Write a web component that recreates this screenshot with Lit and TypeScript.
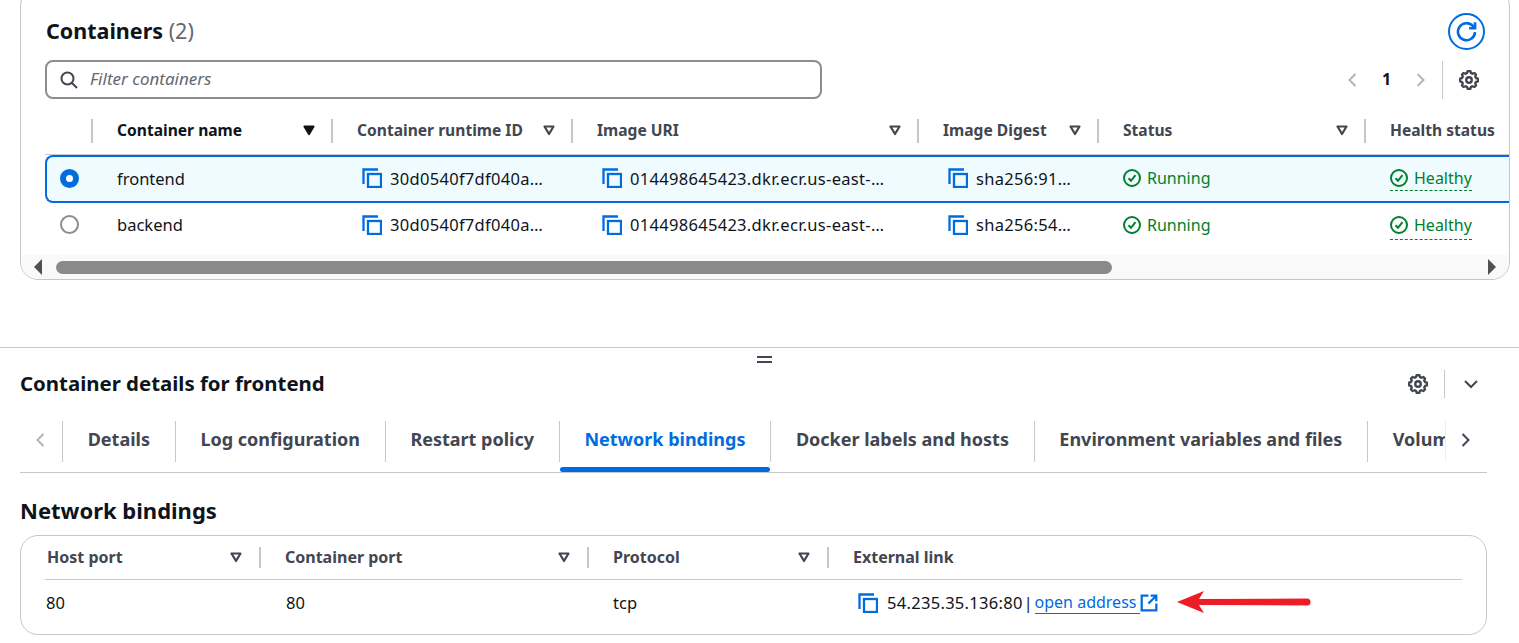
import { LitElement, html, css, svg } from "lit";
import { customElement } from "lit/decorators.js";

const copy = html`<svg class="copy" viewBox="0 0 20 20" fill="none" stroke="#006ce0" stroke-width="2.3"><path d="M1.5 16V1.5H16"/><rect x="6" y="6" width="13" height="13"/></svg>`;
const ok = html`<svg class="ok" viewBox="0 0 18 18" fill="none" stroke="#00802f" stroke-width="2"><circle cx="9" cy="9" r="8"/><path d="M5.5 9.2 8 11.8l4.5-5.6"/></svg>`;
const gearPath = svg`<path d="M13.7 6.5 13 5.3l.6-1.7-1.2-1.2-1.7.6-1.2-.7L9 .8H7l-.5 1.5-1.2.7-1.7-.6-1.2 1.2.6 1.7-.7 1.2-1.5.5v2l1.5.5.7 1.2-.6 1.7 1.2 1.2 1.7-.6 1.2.7.5 1.5h2l.5-1.5 1.2-.7 1.7.6 1.2-1.2-.6-1.7.7-1.2 1.5-.5v-2z"/><circle cx="8" cy="8" r="2.2"/>`;
const gear = html`<svg class="gear" viewBox="0 0 16 16" fill="none" stroke="#424650" stroke-width="1.9" stroke-linejoin="round">${gearPath}</svg>`;
const caret = (active = false) => html`<svg class="caret" viewBox="0 0 14 14" fill=${active ? "#0f141a" : "none"} stroke=${active ? "#0f141a" : "#424650"} stroke-width="2.2" stroke-linejoin="round"><path d="M2.5 3.5h9L7 11z"/></svg>`;
const chev = (d: string, cls: string) => html`<svg class=${cls} viewBox="0 0 16 16" fill="none" stroke="currentColor" stroke-width="2"><path d=${d}/></svg>`;
const LEFT = "M10.5 2 4.5 8l6 6";
const RIGHT = "M5.5 2l6 6-6 6";

const headers = [
  ["Container name", true, true],
  ["Container runtime ID", false, true],
  ["Image URI", false, true],
  ["Image Digest", false, true],
  ["Status", false, true],
  ["Health status", false, false],
] as const;

const rows = [
  { name: "frontend", sel: true, digest: "sha256:91…" },
  { name: "backend", sel: false, digest: "sha256:54…" },
];

const tabs = ["Details", "Log configuration", "Restart policy", "Network bindings", "Docker labels and hosts", "Environment variables and files", "Volumes"];

@customElement("app-root")
export class AppRoot extends LitElement {
  static styles = css`
    :host { display: block; width: 1519px; height: 643px; overflow: hidden; background: #fff; color: #0f141a; font-family: "Noto Sans", Roboto, sans-serif; font-size: 16px; }
    * { box-sizing: border-box; }
    svg { display: block; flex: none; }
    .card-top { margin: -12px 0 0 20px; width: 1490px; height: 292px; border: 1px solid #c6c6cd; border-radius: 18px; overflow: hidden; display: flex; flex-direction: column; }
    .head { display: flex; align-items: center; justify-content: space-between; padding: 23px 24px 1px 25px; height: 62px; }
    h2 { margin: 0; font-size: 21.5px; font-weight: 700; line-height: 30px; }
    h2 span { font-weight: 400; color: #656871; }
    .refresh { width: 37px; height: 37px; border: 2px solid #006ce0; border-radius: 50%; display: flex; align-items: center; justify-content: center; }
    .refresh svg { width: 21px; height: 21px; }
    .tools { display: flex; align-items: center; height: 39px; margin-top: 9px; padding-left: 24px; }
    .filter { width: 777px; height: 39px; border: 2px solid #8c8c94; border-radius: 8px; display: flex; align-items: center; padding: 0 0 2px 13px; gap: 12px; font-size: 17px; font-style: italic; color: #656871; }
    .filter svg { width: 18px; height: 18px; margin-top: 2px; }
    .pager { margin-left: auto; display: flex; align-items: center; height: 39px; }
    .pager .ch { width: 16px; height: 18px; color: #b4b4bb; }
    .pager .num { width: 51px; text-align: center; font-weight: 700; padding-bottom: 2px; }
    .pager .vr { width: 1px; height: 38px; background: #c6c6cd; margin: 0 16px 0 14px; }
    .pager .gear { width: 20px; height: 20px; margin-right: 30px; }
    .grid { display: grid; grid-template-columns: 46px 240px 240px 346px 180px 267px 200px; margin-left: 24px; }
    .th { height: 36px; margin-top: 20px; border-bottom: 1px solid #c6c6cd; padding-bottom: 11px; display: flex; }
    .th > div { flex: 1; display: flex; align-items: center; justify-content: space-between; border-left: 2px solid #c6c6cd; padding: 0 15px 2px 24px; font-size: 15.6px; font-weight: 700; color: #424650; white-space: nowrap; }
    .th .on { color: #0f141a; }
    .th.first > div { border-left: 0; }
    .caret { width: 14px; height: 14px; }
    .row { display: contents; }
    .td { height: 47px; display: flex; align-items: center; padding: 0 0 4px 26px; white-space: nowrap; gap: 8px; font-size: 16.5px; }
    .val { letter-spacing: 0.3px; }
    .td .copy { margin-left: 5px; }
    .copy { width: 20px; height: 20px; }
    .ok { width: 18px; height: 18px; }
    .green { color: #00802f; display: flex; align-items: center; gap: 6px; font-size: 16px; }
    .dash { border-bottom: 1px dashed #00802f; padding-bottom: 3px; margin-top: 4px; }
    .sel .td { height: 48px; padding-bottom: 2px; background: #f0fbff; border-top: 2px solid #006ce0; border-bottom: 2px solid #006ce0; }
    .sel .dash { padding-bottom: 1px; margin-top: 2px; }
    .sel .td:first-child { border-left: 2px solid #006ce0; border-radius: 8px 0 0 8px; }
    .td.radio-cell { padding-left: 15px; }
    .sel .td.radio-cell { padding-left: 13px; }
    .radio { width: 19px; height: 19px; border-radius: 50%; border: 2px solid #8c8c94; background: #fff; }
    .sel .radio { border: 6px solid #006ce0; }
    .scroll { margin-top: auto; height: 24px; background: #f9f9fa; display: flex; align-items: center; padding: 0 13px; }
    .tri { width: 0; height: 0; border-top: 8px solid transparent; border-bottom: 8px solid transparent; }
    .tri.l { border-right: 8px solid #505050; }
    .tri.r { border-left: 8px solid #505050; margin-left: auto; }
    .thumb { margin-left: 14px; width: 1056px; height: 13px; background: #8a8a8a; border-radius: 7px; }
    .bottom { margin-top: 67px; border-top: 1px solid #c6c6cd; }
    .handle { width: 15px; margin: 8px 0 0 757px; height: 7px; border-top: 2px solid #424650; border-bottom: 2px solid #424650; }
    .dhead { display: flex; align-items: center; height: 30px; margin: 6px 40px 0 20px; }
    .dhead h3 { margin: 0 0 2px; font-size: 20.4px; font-weight: 700; flex: 1; }
    .dhead .gear { width: 20px; height: 20px; }
    .dhead .vr { width: 1px; height: 28px; background: #c6c6cd; margin: 0 18px 0 16px; }
    .dhead .ch { width: 16px; height: 16px; color: #424650; }
    .tabs { display: flex; margin: 22px 32px 0 20px; height: 52px; border-bottom: 1px solid #c6c6cd; align-items: flex-start; }
    .nav { width: 42px; height: 41px; flex: none; display: flex; align-items: center; color: #b4b4bb; padding: 0 0 4px 13px; }
    .nav.next { color: #424650; width: 42px; padding-left: 11px; border-left: 1px solid #eee; }
    .nav svg { width: 16px; height: 18px; }
    .tabwrap { flex: 1; min-width: 0; display: flex; overflow: hidden; padding-bottom: 10px; margin-bottom: -10px; }
    .tab { flex: none; height: 41px; border-left: 1px solid #c6c6cd; padding: 0 24.7px 6px; display: flex; align-items: center; font-size: 18px; font-weight: 700; color: #424650; white-space: nowrap; position: relative; }
    .tab.act { color: #006ce0; }
    .tab.act::after { content: ""; position: absolute; left: 0; right: 0; top: 46px; height: 5px; background: #006ce0; border-radius: 3px; }
    h4 { margin: 22px 0 0 20px; font-size: 22px; font-weight: 700; line-height: 30px; }
    .card2 { margin: 10px 32px 0 20px; height: 100px; border: 1px solid #c6c6cd; border-radius: 18px; padding: 0 24px; }
    .g2 { display: grid; grid-template-columns: 216px 328px 240px 1fr; }
    .h2c { height: 44px; padding-top: 11px; border-bottom: 1px solid #c6c6cd; display: flex; }
    .h2c > div { flex: 1; height: 21px; display: flex; align-items: center; justify-content: space-between; font-size: 16px; font-weight: 700; color: #424650; padding: 0 16px 2px 2px; border-right: 2px solid #c6c6cd; }
    .h2c.n > div { padding-left: 24px; }
    .h2c.last > div { border-right: 0; padding-left: 24px; }
    .c2 { height: 47px; display: flex; align-items: center; padding: 0 0 2px 25px; gap: 9px; font-size: 16.5px; }
    .c2.a { padding-left: 1px; }
    .c2.t { padding-left: 24px; }
    .c2 .copy { margin-left: 5px; }
    .lk { display: flex; align-items: center; }
    .pipe { margin: 0 2px 0 1px; font-size: 16px; }
    a { color: #006ce0; text-decoration: none; border-bottom: 1px solid #006ce0; padding-right: 4px; font-size: 16px; }
    .ext { width: 18px; height: 18px; }
    .arrow { width: 134px; height: 24px; margin: 0 0 2px 10px; }
  `;

  render() {
    return html`
      <section class="card-top">
        <div class="head">
          <h2>Containers <span>(2)</span></h2>
          <div class="refresh"><svg viewBox="0 0 16 16" fill="none" stroke="#006ce0" stroke-width="2"><path d="M10 5.5h4.5V1"/><path d="M14.5 8.5A6.5 6.5 0 1 1 13 4l1.2 1.3"/></svg></div>
        </div>
        <div class="tools">
          <div class="filter"><svg viewBox="0 0 18 18" fill="none" stroke="#424650" stroke-width="2"><circle cx="7.5" cy="7.5" r="6"/><path d="m12 12 5 5"/></svg>Filter containers</div>
          <div class="pager">
            ${chev(LEFT, "ch")}<span class="num">1</span>${chev(RIGHT, "ch")}<span class="vr"></span>${gear}
          </div>
        </div>
        <div class="grid">
          <div class="th first"><div></div></div>
          ${headers.map(([t, on, c]) => html`<div class="th"><div class=${on ? "on" : ""}>${t}${c ? caret(on) : ""}</div></div>`)}
          ${rows.map((r) => html`
            <div class="row ${r.sel ? "sel" : ""}">
              <div class="td radio-cell"><div class="radio"></div></div>
              <div class="td">${r.name}</div>
              <div class="td val">${copy}30d0540f7df040a…</div>
              <div class="td val">${copy}014498645423.dkr.ecr.us-east-…</div>
              <div class="td val">${copy}${r.digest}</div>
              <div class="td"><span class="green">${ok}Running</span></div>
              <div class="td"><span class="green dash">${ok}Healthy</span></div>
            </div>`)}
        </div>
        <div class="scroll"><div class="tri l"></div><div class="thumb"></div><div class="tri r"></div></div>
      </section>

      <section class="bottom">
        <div class="handle"></div>
        <div class="dhead">
          <h3>Container details for frontend</h3>
          ${gear}<span class="vr"></span>${chev("M2 5l6 6 6-6", "ch")}
        </div>
        <div class="tabs">
          <div class="nav">${chev(LEFT, "")}</div>
          <div class="tabwrap">
            ${tabs.map((t) => html`<div class="tab ${t === "Network bindings" ? "act" : ""}">${t}</div>`)}
          </div>
          <div class="nav next">${chev(RIGHT, "")}</div>
        </div>
        <h4>Network bindings</h4>
        <div class="card2">
          <div class="g2">
            <div class="h2c"><div>Host port${caret()}</div></div>
            <div class="h2c n"><div>Container port${caret()}</div></div>
            <div class="h2c n"><div>Protocol${caret()}</div></div>
            <div class="h2c last"><div>External link</div></div>
            <div class="c2 a">80</div>
            <div class="c2">80</div>
            <div class="c2 t">tcp</div>
            <div class="c2 t">
              ${copy}<span class="lk"><span class="val">54.235.35.136:80</span><span class="pipe">|</span><a>open address</a><svg class="ext" viewBox="0 0 16 16" fill="none" stroke="#006ce0" stroke-width="2"><path d="M14.5 8.5v6h-13v-13h6"/><path d="M9.5 1.5h5v5M14.5 1.5 7.5 8.5"/></svg></span>
              <svg class="arrow" viewBox="0 0 134 24"><path d="M0 12 27 1l-5 8 108-.5a3.5 3.5 0 0 1 0 7L22 15l5 8z" fill="#ee1c25"/></svg>
            </div>
          </div>
        </div>
      </section>
    `;
  }
}
